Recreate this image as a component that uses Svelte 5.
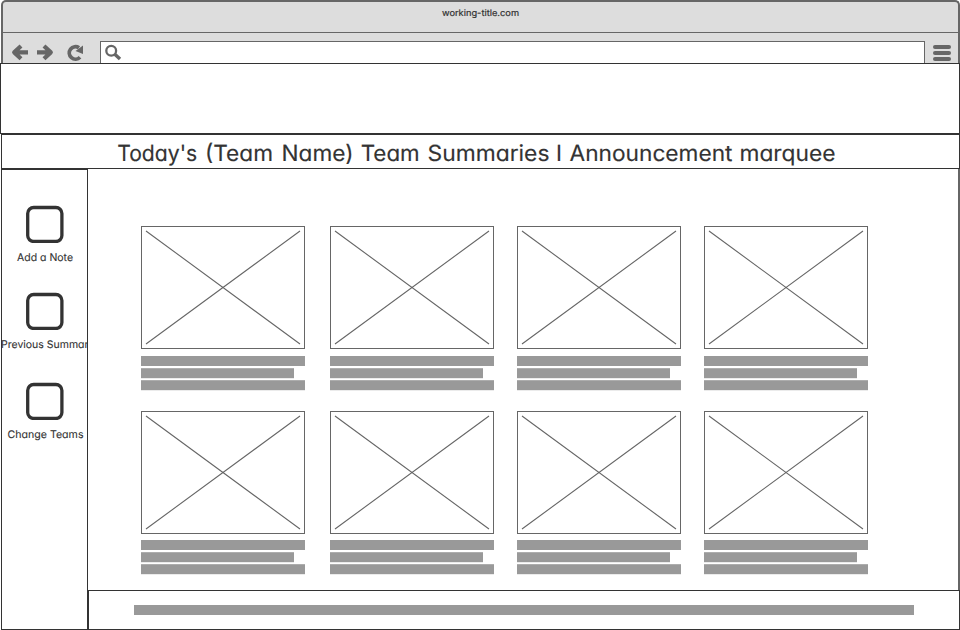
<script>
  const heading = [
    ["Today's", 117.2, 80],
    ['(Team', 205, 68],
    ['Name)', 281.5, 72],
    ['Team', 360.7, 59],
    ['Summaries', 427.5, 122],
    ['I', 556, 0],
    ['Announcement', 569.5, 163],
    ['marquee', 739.5, 96],
  ];
  const actions = [
    { label: 'Add a Note', x: 16, width: 56 },
    { label: 'Previous Summary', x: 0, width: 93.5 },
    { label: 'Change Teams', x: 6.5, width: 76 },
  ];
  const rows = [0, 1];
  const columns = [0, 1, 2, 3];
</script>

<div class="window">
  <header class="chrome">
    <div class="titlebar">
      <svg width="954" height="30">
        <text class="url" x="439" y="14" textLength="77" lengthAdjust="spacingAndGlyphs">working-title.com</text>
      </svg>
    </div>
    <div class="toolbar">
      <svg class="nav" width="97" height="30" fill="none" stroke="#666">
        <g stroke-width="4.200" stroke-linejoin="round">
          <path d="M18 13 L11.200 19.400 L18 25.800 M11.500 19.400 H25" />
          <path d="M41 13 L47.800 19.400 L41 25.800 M47.500 19.400 H34" />
        </g>
        <path d="M77 24.200 A6.200 6.200 0 1 1 76 14.800" stroke-width="3.800" />
        <path d="M80 12.500 V21 L72.500 18 Z" fill="#666" stroke="none" />
      </svg>
      <div class="address">
        <svg width="24" height="19" fill="none" stroke="#666">
          <circle cx="8.200" cy="6.800" r="4.900" stroke-width="2.300" />
          <path d="M11.800 10.200 L17 15" stroke-width="3.400" />
        </svg>
      </div>
      <div class="menu"><i></i><i></i><i></i></div>
    </div>
  </header>

  <div class="banner"></div>

  <div class="marquee">
    <svg width="957" height="33">
      {#each heading as [word, x, width]}
        <text x={x - 2} y="26" textLength={width || undefined} lengthAdjust="spacingAndGlyphs">{word}</text>
      {/each}
    </svg>
  </div>

  <div class="body">
    <nav class="sidebar">
      {#each actions as action}
        <div class="action">
          <svg class="box" width="39" height="38">
            <rect x="2.700" y="2.500" width="34.200" height="34" rx="6" />
          </svg>
          <svg class="caption" width="85" height="18">
            <text x={action.x - 1} y="11" textLength={action.width} lengthAdjust="spacingAndGlyphs">{action.label}</text>
          </svg>
        </div>
      {/each}
    </nav>

    <div class="main">
      <main class="gallery">
        {#each rows as row}
          {#each columns as column}
            <article>
              <svg class="picture" width="162" height="121">
                <path d="M4 4 L158 117 M158 4 L4 117" />
              </svg>
              <svg class="lines" class:raised={row === 1} width="164" height="35">
                <rect y="0" width="164" height="10" />
                <rect y="12.200" width="153" height="10" />
                <rect y="24.200" width="164" height="10" />
              </svg>
            </article>
          {/each}
        {/each}
      </main>
      <footer><div></div></footer>
    </div>
  </div>
</div>

<style>
  .window {
    width: 960px;
    height: 630px;
    box-sizing: border-box;
    overflow: hidden;
    background: #fff;
    display: flex;
    flex-direction: column;
    font-family: Inter, "Noto Sans", sans-serif;
    font-feature-settings: "cv11";
  }
  svg { display: block; }
  text { fill: #333; white-space: pre; text-rendering: geometricPrecision; }
  .chrome {
    box-sizing: border-box;
    height: 63px;
    margin-left: 1px;
    border: 2px solid #666;
    border-bottom: 0;
    border-radius: 5px 5px 0 0;
    background: #ddd;
  }
  .titlebar { height: 30px; border-bottom: 1px solid #666; }
  .url { font-size: 9px; stroke: #333; stroke-width: 0.200px; }
  .toolbar { display: flex; height: 30px; }
  .address {
    box-sizing: border-box;
    width: 825px;
    margin-top: 8px;
    border: 1px solid #666;
    border-bottom: 0;
    background: #fff;
    padding: 2px 0 0 2px;
    height: 22px;
  }
  .menu {
    display: flex;
    flex-direction: column;
    gap: 2px;
    padding: 12px 0 0 8px;
  }
  .menu i { width: 18px; height: 4px; border-radius: 2px; background: #666; }
  .banner { box-sizing: border-box; height: 71px; border: 1px solid #333; }
  .marquee {
    box-sizing: border-box;
    height: 35px;
    margin-left: 1px;
    border: 1px solid #333;
  }
  .marquee text {
    font-size: 22.200px;
    stroke: #333;
    stroke-width: 0.150px;
    stroke-linejoin: round;
  }
  .body { display: flex; height: 461px; margin-left: 1px; }
  .sidebar {
    box-sizing: border-box;
    width: 87px;
    height: 461px;
    border: 1px solid #333;
    padding-top: 35px;
  }
  .action { height: 87px; }
  .action:nth-child(2) { height: 90px; }
  .box { margin-left: 23px; }
  .box rect { fill: none; stroke: #333; stroke-width: 3.300px; }
  .caption { margin-top: 7px; overflow: hidden; }
  .caption text { font-size: 10.500px; stroke: #333; stroke-width: 0.100px; }
  .main { width: 872px; display: flex; flex-direction: column; }
  .gallery {
    box-sizing: border-box;
    height: 421px;
    border-right: 2px solid #666;
    padding: 57px 0 0 53px;
    display: grid;
    grid-template-columns: 189px 187px 187px 164px;
    grid-template-rows: 185px 179px;
  }
  .picture { border: 1px solid #666; }
  .picture path { stroke: #666; stroke-width: 1.100px; }
  .lines { margin-top: 7px; }
  .lines.raised { margin-top: 6px; }
  .lines rect { fill: #999; }
  footer {
    box-sizing: border-box;
    height: 40px;
    border: 1px solid #333;
    background: #fff;
    padding: 14px 0 0 45px;
  }
  footer div { width: 780px; height: 10px; background: #999; }
</style>
